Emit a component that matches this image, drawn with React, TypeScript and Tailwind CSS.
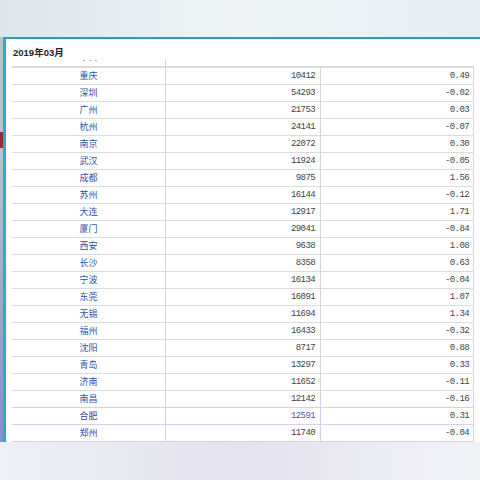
import React from "react";

const rows: [string, string, string][] = [
  ["重庆", "10412", "0.49"],
  ["深圳", "54293", "-0.02"],
  ["广州", "21753", "0.03"],
  ["杭州", "24141", "-0.07"],
  ["南京", "22072", "0.30"],
  ["武汉", "11924", "-0.05"],
  ["成都", "9875", "1.56"],
  ["苏州", "16144", "-0.12"],
  ["大连", "12917", "1.71"],
  ["厦门", "29041", "-0.84"],
  ["西安", "9638", "1.08"],
  ["长沙", "8358", "0.63"],
  ["宁波", "16134", "-0.04"],
  ["东莞", "16091", "1.07"],
  ["无锡", "11694", "1.34"],
  ["福州", "16433", "-0.32"],
  ["沈阳", "8717", "0.88"],
  ["青岛", "13297", "0.33"],
  ["济南", "11652", "-0.11"],
  ["南昌", "12142", "-0.16"],
  ["合肥", "12591", "0.31"],
  ["郑州", "11740", "-0.04"],
];

const cjk = { fontFamily: '"Liberation Sans", "Noto Sans CJK SC", sans-serif' };
const num = { fontFamily: '"Liberation Mono", "Noto Sans CJK SC", monospace' };

export default function App() {
  return (
    <div className="w-[480px] h-[480px] overflow-hidden flex flex-col bg-gradient-to-b from-[#e3ebef] to-[#eef2f6]">
      <div className="h-[37px] shrink-0 bg-gradient-to-r from-[#dde6ea] via-[#f0f4f6] to-[#e6eef2]" />
      <div className="flex h-[405px] shrink-0">
        <div className="w-[3px] shrink-0 bg-[#b9c3ca] flex flex-col">
          <div className="h-[95px]" />
          <div className="h-[16px] bg-[#9b2a35]" />
          <div className="flex-1 bg-gradient-to-b from-[#b9c3ca] to-[#8a8ec8]" />
        </div>
        <div className="flex-1 bg-white border-l-[3px] border-t-2 border-l-[#3aa3cf] border-t-[#2f9db6] flex flex-col">
          <div className="h-[21px] pl-[7px] flex items-end pb-[2px]">
            <span className="text-[9.5px] font-bold text-[#222] leading-none" style={cjk}>
              2019年03月
            </span>
          </div>
          <div className="ml-[6px] w-[462px] flex flex-col">
            <div className="flex h-[7px]">
              <div className="w-[153px] flex justify-center items-start gap-[4px] pt-[1px] pl-[2px]">
                <div className="w-[2px] h-[1px] bg-[#aaa]" />
                <div className="w-[2px] h-[1px] bg-[#aaa]" />
                <div className="w-[2px] h-[1px] bg-[#aaa]" />
              </div>
              <div className="w-[155px] border-l border-[#d6d6d6]" />
              <div className="flex-1" />
            </div>
            <div className="h-[2px] bg-[#dadada]" />
            {rows.map(([c, a, b], i) => {
              const purple = i >= 19;
              return (
                <div
                  key={c}
                  className={`flex h-[17px] border-b ${purple ? "border-[#dccdea]" : "border-[#dcdcdc]"}`}
                >
                  <div
                    className={`w-[153px] flex items-center justify-center text-[9px] leading-none ${i >= 20 ? "text-[#3a44b0]" : "text-[#2e55a6]"}`}
                    style={cjk}
                  >
                    {c}
                  </div>
                  <div
                    className={`w-[155px] border-l ${purple ? "border-[#dccdea]" : "border-[#d6d6d6]"} flex items-center justify-end pr-[5px] text-[9px] tracking-[-0.6px] leading-none ${i === 20 ? "text-[#6a4f9a]" : "text-[#444]"}`}
                    style={num}
                  >
                    {a}
                  </div>
                  <div
                    className={`w-[154px] border-l border-r ${purple ? "border-[#dccdea]" : "border-[#d6d6d6]"} flex items-center justify-end pr-[4px] text-[9px] tracking-[-0.6px] leading-none text-[#444]`}
                    style={num}
                  >
                    {b}
                  </div>
                </div>
              );
            })}
          </div>
        </div>
      </div>
      <div className="flex-1 bg-gradient-to-r from-[#eef0f5] via-[#e4e2ee] to-[#f2f3f7]" />
    </div>
  );
}
